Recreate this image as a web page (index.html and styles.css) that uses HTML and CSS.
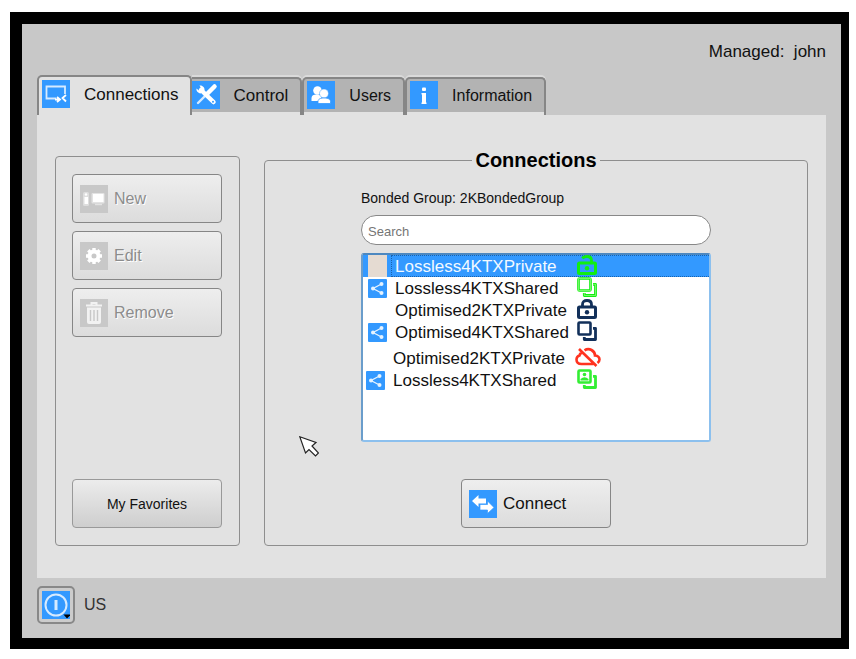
FILE: index.html
```html
<!DOCTYPE html>
<html lang="en">
<head>
<meta charset="utf-8">
<title>Connections</title>
<link rel="stylesheet" href="styles.css">
</head>
<body>
<svg class="defs" aria-hidden="true">
  <symbol id="share" viewBox="0 0 19 19">
    <rect width="19" height="19" rx="1" fill="#3399ff"/>
    <path d="M13.500 5 5 9.500l8.500 4.500" fill="none" stroke="#e6f3ff" stroke-width="1.300"/>
    <circle cx="5" cy="9.500" r="2" fill="#e6f3ff"/><circle cx="13.500" cy="5" r="2" fill="#e6f3ff"/><circle cx="13.500" cy="14" r="2" fill="#e6f3ff"/>
  </symbol>
  <symbol id="copy" viewBox="0 0 20 20">
    <rect x="1.500" y="1.500" width="12" height="12" rx="1" fill="none" stroke="currentColor" stroke-width="2.600"/>
    <path d="M16 7.300h2.500v11.200H7.300V16" fill="none" stroke="currentColor" stroke-width="2.800" stroke-linejoin="round"/>
  </symbol>
  <symbol id="lock-body" viewBox="0 0 20 20">
    <rect x="1.500" y="8" width="17" height="10.500" rx="1" fill="none" stroke="currentColor" stroke-width="3"/>
    <circle cx="10" cy="13.300" r="2.200" fill="currentColor"/>
  </symbol>
</svg>
<main class="screen">
  <header class="status">Managed:&nbsp; john</header>
  <nav class="tabs" role="tablist">
    <button class="tab tab-active" role="tab" aria-selected="true">
      <svg class="icon" viewBox="0 0 28 28"><rect width="28" height="28" fill="#3399ff"/><path d="M14 18.500H4.500V6.500H23V14" fill="none" stroke="#d5eaff" stroke-width="1.800"/><path d="M13 19.500h4.500M15 17l3 2.500-3 2.500M24 15l-3.500 3 3.500 3.500" fill="none" stroke="#fff" stroke-width="1.800"/></svg>
      <span>Connections</span>
    </button>
    <button class="tab tab-next" role="tab" aria-selected="false">
      <svg class="icon" viewBox="0 0 28 28"><rect width="28" height="28" fill="#3399ff"/><path d="M22.500 5.500 15.500 12.500" stroke="#fff" stroke-width="4.500" stroke-linecap="round"/><path d="M15 13 6 22" stroke="#d5eaff" stroke-width="2.400" stroke-linecap="round"/><path d="m9 9 12.500 12" stroke="#fff" stroke-width="4.500" stroke-linecap="round"/><path d="M7.500 4.500c3-.5 5.500 2 5 5l-4 3C6 12 4 10 4.500 7.500L7.500 10 9.500 8Z" fill="#fff"/><circle cx="21" cy="20.700" r="1" fill="#3399ff"/></svg>
      <span>Control</span>
    </button>
    <button class="tab tab-compact" role="tab" aria-selected="false">
      <svg class="icon" viewBox="0 0 28 28"><rect width="28" height="28" fill="#3399ff"/><circle cx="10.500" cy="9.500" r="4.300" fill="#fff"/><path d="M4.500 20v-3c0-2.500 2-3.500 5-3.500s5 1 5 3.500L12 20Z" fill="#fff"/><circle cx="17" cy="12.500" r="4.500" fill="#fff" stroke="#3399ff" stroke-width=".5"/><path d="M11 22.500v-2c0-2.500 2.500-3.500 6-3.500s6.500 1 6.500 3.500v2Z" fill="#fff" stroke="#3399ff" stroke-width=".8"/></svg>
      <span>Users</span>
    </button>
    <button class="tab tab-compact" role="tab" aria-selected="false">
      <svg class="icon" viewBox="0 0 28 28"><rect width="28" height="28" fill="#3399ff"/><rect x="12" y="6.500" width="4" height="3.500" rx="1" fill="#fff"/><path d="M11.500 12H16v9.500h.5V23h-5v-1.500h.5v-8h-.5Z" fill="#fff"/></svg>
      <span>Information</span>
    </button>
  </nav>
  <section class="panel" role="tabpanel">
    <div class="group actions">
      <button class="btn" disabled>
        <svg class="icon" viewBox="0 0 28 28"><rect width="28" height="28" fill="#c8c8c8"/><rect x="3" y="7" width="6" height="14" rx="1.500" fill="#dedede"/><rect x="4.500" y="12" width="3.500" height="7" fill="#fff"/><circle cx="6" cy="9.500" r="1.200" fill="#fff"/><rect x="11.500" y="8" width="13" height="10.500" rx="1" fill="#e3e3e3"/><rect x="13" y="9" width="10.500" height="8" fill="#fff"/><path d="M15 19.500h7" stroke="#e3e3e3" stroke-width="1.500"/></svg>
        <span>New</span>
      </button>
      <button class="btn" disabled>
        <svg class="icon" viewBox="0 0 28 28"><rect width="28" height="28" fill="#c8c8c8"/><circle cx="14" cy="14" r="4.500" fill="none" stroke="#fff" stroke-width="4"/><g stroke="#fff" stroke-width="3.400"><path d="M14 6v3m0 10v3M6 14h3m10 0h3M8.300 8.300l2 2m7.400 7.400 2 2M19.700 8.300l-2 2m-7.400 7.400-2 2"/></g></svg>
        <span>Edit</span>
      </button>
      <button class="btn" disabled>
        <svg class="icon" viewBox="0 0 28 28"><rect width="28" height="28" fill="#c8c8c8"/><path d="M6 6.500h16M11.500 5.500V4h5v1.500" fill="none" stroke="#f2f2f2" stroke-width="2"/><path d="M7 8.500h14V23q0 2-2 2H9q-2 0-2-2Z" fill="#f2f2f2"/><path d="M10.500 11v11M14 11v11m3.500-11v11" stroke="#c8c8c8" stroke-width="1.400"/></svg>
        <span>Remove</span>
      </button>
      <button class="btn favorites">My Favorites</button>
    </div>
    <fieldset class="group connections">
      <legend>Connections</legend>
      <div class="browser">
        <label class="caption" for="search">Bonded Group: 2KBondedGroup</label>
        <input class="search" id="search" type="text" placeholder="Search">
        <div class="list" role="listbox" aria-label="Connections">
          <div class="row selected" role="option" aria-selected="true">
            <span class="blank"></span>
            <span class="name">Lossless4KTXPrivate<svg class="state green" viewBox="0 0 20 20"><use href="#lock-body"/><path d="M5.500 3.500Q6.500 1.500 10 1.500q4.500 0 4.500 4V8" fill="none" stroke="currentColor" stroke-width="2.800"/></svg></span>
          </div>
          <div class="row" role="option">
            <svg class="mark"><use href="#share"/></svg>
            <span class="name">Lossless4KTXShared<svg class="state green" viewBox="0 0 20 20"><use href="#copy"/><path d="M1.500 1.500h12v12h-12ZM16 7.300h2.500v11.200H7.300V16" fill="none" stroke="#b8ff9f" stroke-width=".6"/></svg></span>
          </div>
          <div class="row" role="option">
            <span class="mark"></span>
            <span class="name">Optimised2KTXPrivate<svg class="state navy" viewBox="0 0 20 20"><use href="#lock-body"/><path d="M5.500 8V5.500Q5.500 1.500 10 1.500q4.500 0 4.500 4V8" fill="none" stroke="currentColor" stroke-width="2.800"/></svg></span>
          </div>
          <div class="row" role="option">
            <svg class="mark"><use href="#share"/></svg>
            <span class="name">Optimised4KTXShared<svg class="state navy" viewBox="0 0 20 20"><use href="#copy"/></svg></span>
          </div>
          <div class="subgroup" role="group">
            <div class="row" role="option">
              <span class="mark"></span>
              <span class="name">Optimised2KTXPrivate<svg class="state cloud" viewBox="0 0 26 20"><path d="M7.500 5.500Q5 6 4.500 8.500 1.500 9.500 1.500 12.500q0 4.500 5 4.500h12M9.500 3.300q3.500-2.300 7-.3 3.500 2 3.500 5.500 4.500.5 4.500 4 0 2-2 3.500M4 2 21.500 19" fill="none" stroke="currentColor" stroke-width="2.600"/></svg></span>
            </div>
            <div class="row" role="option">
              <svg class="mark"><use href="#share"/></svg>
              <span class="name">Lossless4KTXShared<svg class="state lime" viewBox="0 0 20 20"><use href="#copy"/><circle cx="7.500" cy="5.500" r="1.800" fill="currentColor"/><path d="M3.500 11.500V10q4-3.500 8 0v1.500Z" fill="currentColor"/></svg></span>
            </div>
          </div>
        </div>
      </div>
      <button class="btn connect">
        <svg class="icon" viewBox="0 0 28 28"><rect width="28" height="28" fill="#3399ff"/><path d="M3 11l6.500-6v3.500H17v5H9.500V17Z" fill="#fff"/><path d="M25 17.500 18.500 11v3.500H11v5.500h7.500v3.500Z" fill="#fff" stroke="#3399ff" stroke-width=".7"/></svg>
        <span>Connect</span>
      </button>
      <svg class="pointer" viewBox="0 0 20 21" aria-hidden="true"><path d="M.8.8 17 6.500l-4 3.500 6.500 7-3 3L10 13.500 6.500 17Z" fill="#fff" stroke="#222" stroke-width="1.200"/></svg>
    </fieldset>
  </section>
  <footer class="footer">
    <button class="power" aria-label="Power">
      <svg class="icon" viewBox="0 0 28 28"><rect width="28" height="28" fill="#3399ff"/><circle cx="14" cy="14" r="10.500" fill="none" stroke="#d5eaff" stroke-width="2"/><path d="M14 9v10" stroke="#d5eaff" stroke-width="3"/><path d="M21.500 23.500H28v1L25 27.500Z" fill="#000"/></svg>
    </button>
    <span>US</span>
  </footer>
</main>
</body>
</html>
```
FILE: styles.css
```css
* {
  box-sizing: border-box;
}

body {
  margin: 0;
  min-height: 100vh;
  padding: 12px 7px 10px 10px;
  display: flex;
  background: #fff;
  color: #111;
  font: 17px/22px "Liberation Sans", Arial, sans-serif;
}

button,
input {
  font: inherit;
  color: inherit;
}

.defs {
  position: absolute;
  width: 0;
  height: 0;
}

.screen {
  flex: 1;
  display: flex;
  flex-direction: column;
  padding: 17px 15px 15px;
  border: solid #000;
  border-width: 12px 8px 11px 12px;
  background: #c8c8c8;
}

.status {
  text-align: right;
}

.icon {
  flex: none;
  width: 28px;
  height: 28px;
}

.tabs {
  display: flex;
  align-items: flex-end;
  margin-top: 12px;
}

.tab {
  display: flex;
  gap: 14px;
  height: 38px;
  padding: 2px 12px 0 3px;
  border: 2px solid #868686;
  border-bottom: 0;
  border-radius: 5px 5px 0 0;
  background: linear-gradient(#b3b3b3 33px, #e2e2e2 33px);
  box-shadow: 0 -2px #dadada;
}

.tab span {
  margin-top: 4px;
}

.tab-active {
  height: 40px;
  padding: 3px 11px 0 3px;
  background: #e2e2e2;
  box-shadow: none;
}

.tab-next {
  padding-left: 0;
  border-left: 0;
  border-top-left-radius: 0;
}

.tab-compact {
  font-size: 16px;
}

.panel {
  flex: 1;
  display: flex;
  gap: 24px;
  padding: 34px 18px 32px;
  background: #e2e2e2;
}

.group {
  border: 1px solid #8e8e8e;
  border-radius: 4px;
}

.actions {
  display: flex;
  flex-direction: column;
  gap: 8px;
  flex: 0 0 185px;
  margin-top: 7px;
  padding: 17px 16px;
}

.btn {
  display: flex;
  align-items: center;
  gap: 6px;
  width: 150px;
  height: 49px;
  padding: 0 7px;
  border: 1px solid #868686;
  border-radius: 4px;
  background: linear-gradient(#eee, #dcdcdc);
}

.btn:disabled {
  color: #8c8c8c;
  font-size: 16px;
  text-shadow: 1px 1px #fff;
}

.favorites {
  justify-content: center;
  margin-top: auto;
  border-color: #999;
  background: linear-gradient(#ececec, #cecece);
  font-size: 14px;
}

.connections {
  position: relative;
  flex: 1;
  min-width: 0;
  display: flex;
  flex-direction: column;
  align-items: center;
  justify-content: space-between;
  margin: 0;
  padding: 16px 17px 17px;
}

.connections legend {
  margin: 0 auto;
  padding: 0 3px;
  color: #000;
  font-size: 20px;
  font-weight: bold;
}

.browser {
  display: flex;
  flex-direction: column;
  width: 100%;
  max-width: 350px;
}

.caption {
  font-size: 14px;
}

.search {
  height: 30px;
  margin: 6px 0 8px;
  padding: 2px 6px 0;
  border: 1px solid #888;
  border-radius: 15px;
  background: #fff;
  font-size: 13px;
}

.search::placeholder {
  color: #757575;
  opacity: 1;
}

.list {
  height: 189px;
  border: 2px solid #8cc0ee;
  border-top-color: #4d88c0;
  border-left-color: #6a9dcb;
  border-radius: 3px;
  background: #fff;
}

.row {
  display: flex;
  align-items: center;
  gap: 4px;
  height: 22px;
  padding-left: 5px;
}

.mark,
.blank {
  flex: none;
  width: 19px;
  height: 19px;
}

.blank {
  height: 22px;
  background: #e5dbd2;
}

.name {
  display: flex;
  flex: 1;
  align-items: center;
  height: 22px;
  padding: 2px 112px 0 4px;
}

.selected {
  background: #3399ff;
  color: #f4faff;
}

.selected .name {
  border: 1px dotted #1763b0;
  border-right: 0;
  padding: 1px 112px 0 3px;
}

.subgroup {
  margin: 4px 0 0 -2px;
}

.state {
  flex: none;
  width: 20px;
  height: 20px;
  margin: -4px 0 0 auto;
}

.green {
  color: #11ee11;
}

.lime {
  color: #33ee33;
}

.navy {
  color: #12305a;
}

.cloud {
  width: 26px;
  margin-right: -4px;
  color: #ff3320;
}

.pointer {
  position: absolute;
  top: 265px;
  left: 34px;
  width: 20px;
  height: 21px;
}

.footer {
  display: flex;
  align-items: center;
  gap: 9px;
  margin-bottom: -1px;
  padding-top: 8px;
  color: #333;
  font-size: 16px;
}

.power {
  display: flex;
  padding: 3px;
  border: 2px solid #888;
  border-radius: 5px;
  background: #ccc;
}
```
